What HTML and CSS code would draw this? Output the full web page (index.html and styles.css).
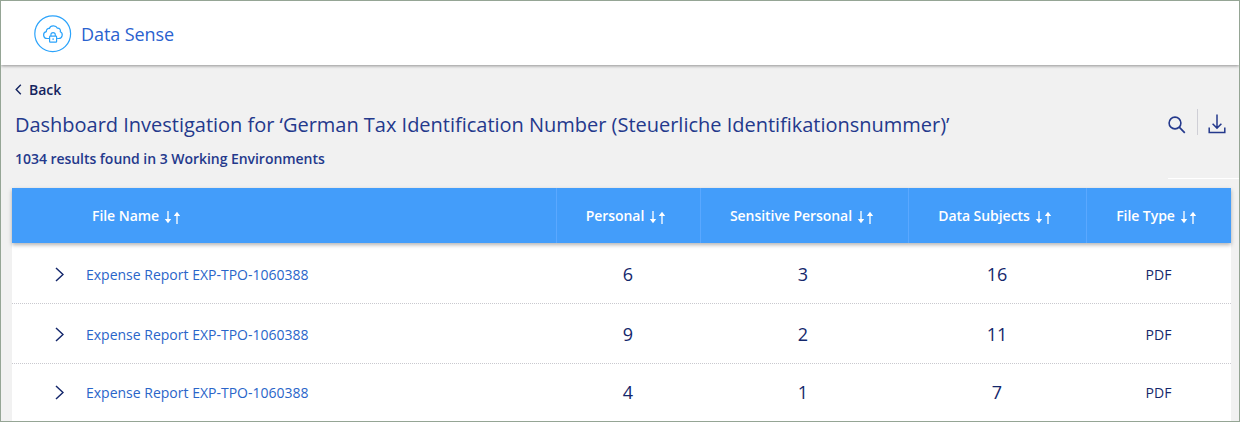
FILE: index.html
```html
<!DOCTYPE html>
<html lang="en">
<head>
<meta charset="utf-8">
<title>Data Sense</title>
<link rel="stylesheet" href="styles.css">
</head>
<body>
<svg class="defs" aria-hidden="true">
  <symbol id="sort" viewBox="0 0 17 13"><path d="M4 0v9M13 4v9" fill="none" stroke="currentColor" stroke-width="1.3"/><path d="M.8 8h6.4L4 12.3zM9.8 5h6.4L13 .7z" fill="currentColor"/></symbol>
  <symbol id="chevron" viewBox="0 0 9 15"><path d="M1 1l7 6.500-7 6.500" fill="none" stroke="currentColor" stroke-width="1.5"/></symbol>
</svg>
<div class="frame">
  <header class="topbar">
    <svg class="logo" viewBox="0 0 38 38" fill="none" stroke="currentColor">
      <circle cx="18.700" cy="18.700" r="17.900" stroke-width="1.2"/>
      <path d="M15 23.500h-2a3.500 3.500 0 0 1-.7-6.900c-.1-1.900 1.300-3.400 3.100-3.100.9-3.200 6.500-3.600 8-.3 2.300-.1 3.500 1.600 2.900 3.500 3.200 1.400 2.200 6.800-1.500 6.800h-1.700" stroke-width="1.200"/>
      <rect x="15.600" y="21.200" width="7" height="6" rx=".7" stroke-width="1.200"/>
      <path d="M16.900 21v-1.200a2.200 2.200 0 0 1 4.400 0v1.200M19.100 23.200v1.800" stroke-width="1.100"/>
    </svg>
    <span class="brand">Data Sense</span>
  </header>
  <main class="content">
    <a class="back"><svg class="back-icon" viewBox="0 0 7 11"><path d="M5.800.8L1.200 5.500l4.600 4.700" fill="none" stroke="currentColor" stroke-width="1.400"/></svg>Back</a>
    <div class="title-row">
      <h1 class="title">Dashboard Investigation for ‘German Tax Identification Number (Steuerliche Identifikationsnummer)’</h1>
      <div class="actions">
        <svg class="search" viewBox="0 0 18 18" fill="none" stroke="currentColor"><circle cx="7" cy="7" r="5.900" stroke-width="1.600"/><path d="M11.200 11.200l5.600 5.600" stroke-width="1.700"/></svg>
        <span class="divider"></span>
        <svg class="download" viewBox="0 0 18 20" fill="none" stroke="currentColor" stroke-width="1.500"><path d="M9 .5v13.500M4.600 9.700L9 14.100l4.400-4.400M1.200 13.500v5h15.600v-5"/></svg>
      </div>
    </div>
    <p class="summary">1034 results found in 3 Working Environments</p>
    <div class="rule"></div>
    <div class="table">
      <div class="row head">
        <div class="cell name">File Name<svg class="sort"><use href="#sort"/></svg></div>
        <div class="cell">Personal<svg class="sort"><use href="#sort"/></svg></div>
        <div class="cell">Sensitive Personal<svg class="sort"><use href="#sort"/></svg></div>
        <div class="cell">Data Subjects<svg class="sort"><use href="#sort"/></svg></div>
        <div class="cell">File Type<svg class="sort"><use href="#sort"/></svg></div>
      </div>
      <div class="row">
        <div class="cell name"><svg class="chevron"><use href="#chevron"/></svg><a class="file">Expense Report EXP-TPO-1060388</a></div>
        <div class="cell num">6</div><div class="cell num">3</div><div class="cell num">16</div><div class="cell">PDF</div>
      </div>
      <div class="row">
        <div class="cell name"><svg class="chevron"><use href="#chevron"/></svg><a class="file">Expense Report EXP-TPO-1060388</a></div>
        <div class="cell num">9</div><div class="cell num">2</div><div class="cell num">11</div><div class="cell">PDF</div>
      </div>
      <div class="row">
        <div class="cell name"><svg class="chevron"><use href="#chevron"/></svg><a class="file">Expense Report EXP-TPO-1060388</a></div>
        <div class="cell num">4</div><div class="cell num">1</div><div class="cell num">7</div><div class="cell">PDF</div>
      </div>
    </div>
  </main>
</div>
</body>
</html>
```
FILE: styles.css
```css
* { box-sizing: border-box; }
body { margin: 0; background: #fff; font-family: "Open Sans", "Noto Sans", sans-serif; color: #14276b; }
.defs { display: none; }
.frame { width: 1240px; height: 422px; border: 1px solid #95a595; background: #f1f1f1; overflow: hidden; display: flex; flex-direction: column; }
.topbar { height: 64px; flex: none; background: #fff; display: flex; align-items: center; padding-left: 33px; gap: 9px; box-shadow: 0 1px 3px rgba(0, 0, 0, .4); }
.logo { width: 38px; height: 38px; color: #2ba3fb; margin-top: 2px; }
.brand { font-size: 18px; line-height: 24px; color: #2a62cf; margin-top: 1px; letter-spacing: -.08px; }
.content { padding: 14px 8px 0 11px; flex: 1; display: flex; flex-direction: column; }
.back { display: flex; align-items: center; gap: 7px; padding-left: 3px; height: 20px; margin-bottom: 1px; font-size: 14px; font-weight: 600; color: #14245f; }
.back-icon { width: 7px; height: 11px; }
.title-row { display: flex; justify-content: space-between; align-items: center; height: 50px; padding: 0 5px 0 3px; }
.title { margin: 0; font-size: 20px; line-height: 28px; font-weight: 400; color: #24398c; white-space: nowrap; letter-spacing: -.015px; }
.actions { display: flex; align-items: center; color: #24398c; }
.search { width: 18px; height: 18px; }
.divider { width: 1px; height: 26px; background: #cfcfd6; margin: 0 10px 6px 11px; }
.download { width: 18px; height: 20px; margin-top: -3px; }
.summary { margin: 0; padding-left: 3px; height: 18px; font-size: 14px; line-height: 18px; font-weight: 600; color: #24398c; letter-spacing: -.04px; }
.rule { align-self: flex-end; width: 71px; height: 1px; margin: 10px -8px 9px 0; background: #fff; flex: none; }
.table { flex: 1; background: #fff; }
.row { display: grid; grid-template-columns: 544px 144px 208px 178px 145px; height: 60px; border-bottom: 1px dotted #c9c9cf; }
.row:nth-child(2) { height: 61px; }
.row:last-child { height: 57px; border-bottom: 0; }
.cell { display: flex; align-items: center; justify-content: center; font-size: 14px; padding-top: 2px; }
.row:last-child .cell { padding-top: 0; }
.cell.name { justify-content: flex-start; }
.head { height: 55px; border: 0; background: #439dfa; color: #fff; box-shadow: 0 2px 4px rgba(0, 0, 0, .3); position: relative; }
.head .cell { font-weight: 600; padding-bottom: 1px; padding-top: 0; letter-spacing: -.05px; }
.head .cell + .cell { border-left: 1px solid #5aa8ff; padding-right: 5px; }
.head .name { padding-left: 80px; }
.sort { width: 17px; height: 13px; margin-left: 5px; margin-top: 4px; }
.chevron { width: 9px; height: 15px; margin-left: 43px; margin-right: 22px; }
.file { font-size: 14px; color: #2a65c9; }
.num { font-size: 18px; }
.row:nth-child(n+3) .num { padding-bottom: 1px; }
.num:nth-child(3) { padding-right: 2px; }
```
